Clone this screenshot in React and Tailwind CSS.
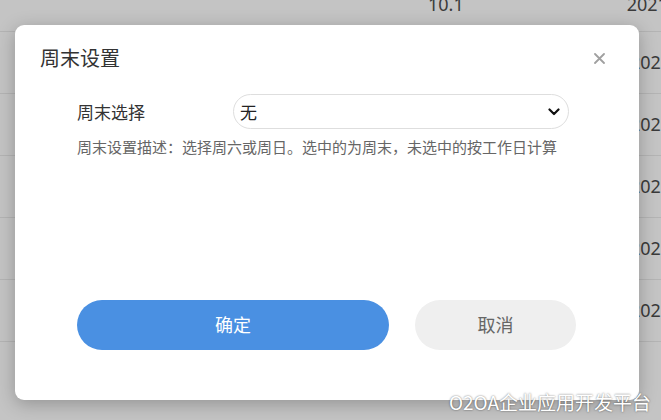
import React from "react";

const rows = ["2021", "2021", "2021", "2021", "2021"];

const App = () => {
  return (
    <div
      className="relative h-[420px] w-[661px] overflow-hidden bg-[#c4c4c4] text-[#333]"
      style={{ fontFamily: '"Microsoft YaHei", "Noto Sans CJK SC", sans-serif' }}
    >
      {/* Table behind the mask */}
      <div className="flex flex-col font-['Noto_Sans',sans-serif]">
        <div className="flex h-[32px] items-start whitespace-nowrap border-b border-[#b4b4b4] text-[18px] leading-none text-[#3a3a3a]">
          <span className="ml-[428px] -mt-[5px]">10.1</span>
          <span className="ml-[163px] -mt-[5px]">2021</span>
        </div>
        {rows.map((r, i) => (
          <div
            key={i}
            className="flex h-[62px] items-center whitespace-nowrap border-b border-[#b4b4b4] text-[18px] text-[#3a3a3a]"
          >
            <span className="ml-[630px]">{r}</span>
          </div>
        ))}
      </div>

      {/* Dialog */}
      <div className="absolute left-[15px] top-[25px] flex h-[375px] w-[624px] flex-col rounded-[9px] bg-white shadow-[0_4px_18px_rgba(0,0,0,0.25)]">
        <div className="flex items-center justify-between pl-[25px] pr-[34px] pt-[18px]">
          <h2 className="text-[20px] font-normal text-[#333]">周末设置</h2>
          <svg width="11" height="11" viewBox="0 0 11 11">
            <path d="M1 1 L10 10 M10 1 L1 10" stroke="#a0a0a0" strokeWidth="1.8" strokeLinecap="round" />
          </svg>
        </div>

        <div className="mt-[21px] pl-[62px] pr-[70px]">
          <div className="flex items-center">
            <label className="w-[156px] text-[17px] text-[#333]">周末选择</label>
            <div className="flex h-[35px] flex-1 items-center justify-between rounded-full border border-[#dedede] pl-[6px] pr-[8px]">
              <span className="text-[17px] text-[#222]">无</span>
              <svg width="12" height="8" viewBox="0 0 12 8">
                <path d="M1.5 1.5 L6 6 L10.5 1.5" fill="none" stroke="#111" strokeWidth="2.2" strokeLinecap="round" strokeLinejoin="round" />
              </svg>
            </div>
          </div>
          <p className="mt-[7px] whitespace-nowrap text-[15px] text-[#666]">
            周末设置描述：选择周六或周日。选中的为周末，未选中的按工作日计算
          </p>
        </div>

        <div className="mt-[141px] flex items-center pl-[62px]">
          <button className="h-[50px] w-[312px] rounded-full bg-[#4a90e2] text-[18px] text-white">
            确定
          </button>
          <button className="ml-[26px] h-[50px] w-[161px] rounded-full bg-[#efefef] text-[18px] text-[#666]">
            取消
          </button>
        </div>
      </div>

      {/* Watermark */}
      <div className="absolute bottom-[4px] right-[10px] text-[19px] text-white [text-shadow:0_0_2px_rgba(0,0,0,0.6)]">
        O2OA企业应用开发平台
      </div>
    </div>
  );
};

export default App;
